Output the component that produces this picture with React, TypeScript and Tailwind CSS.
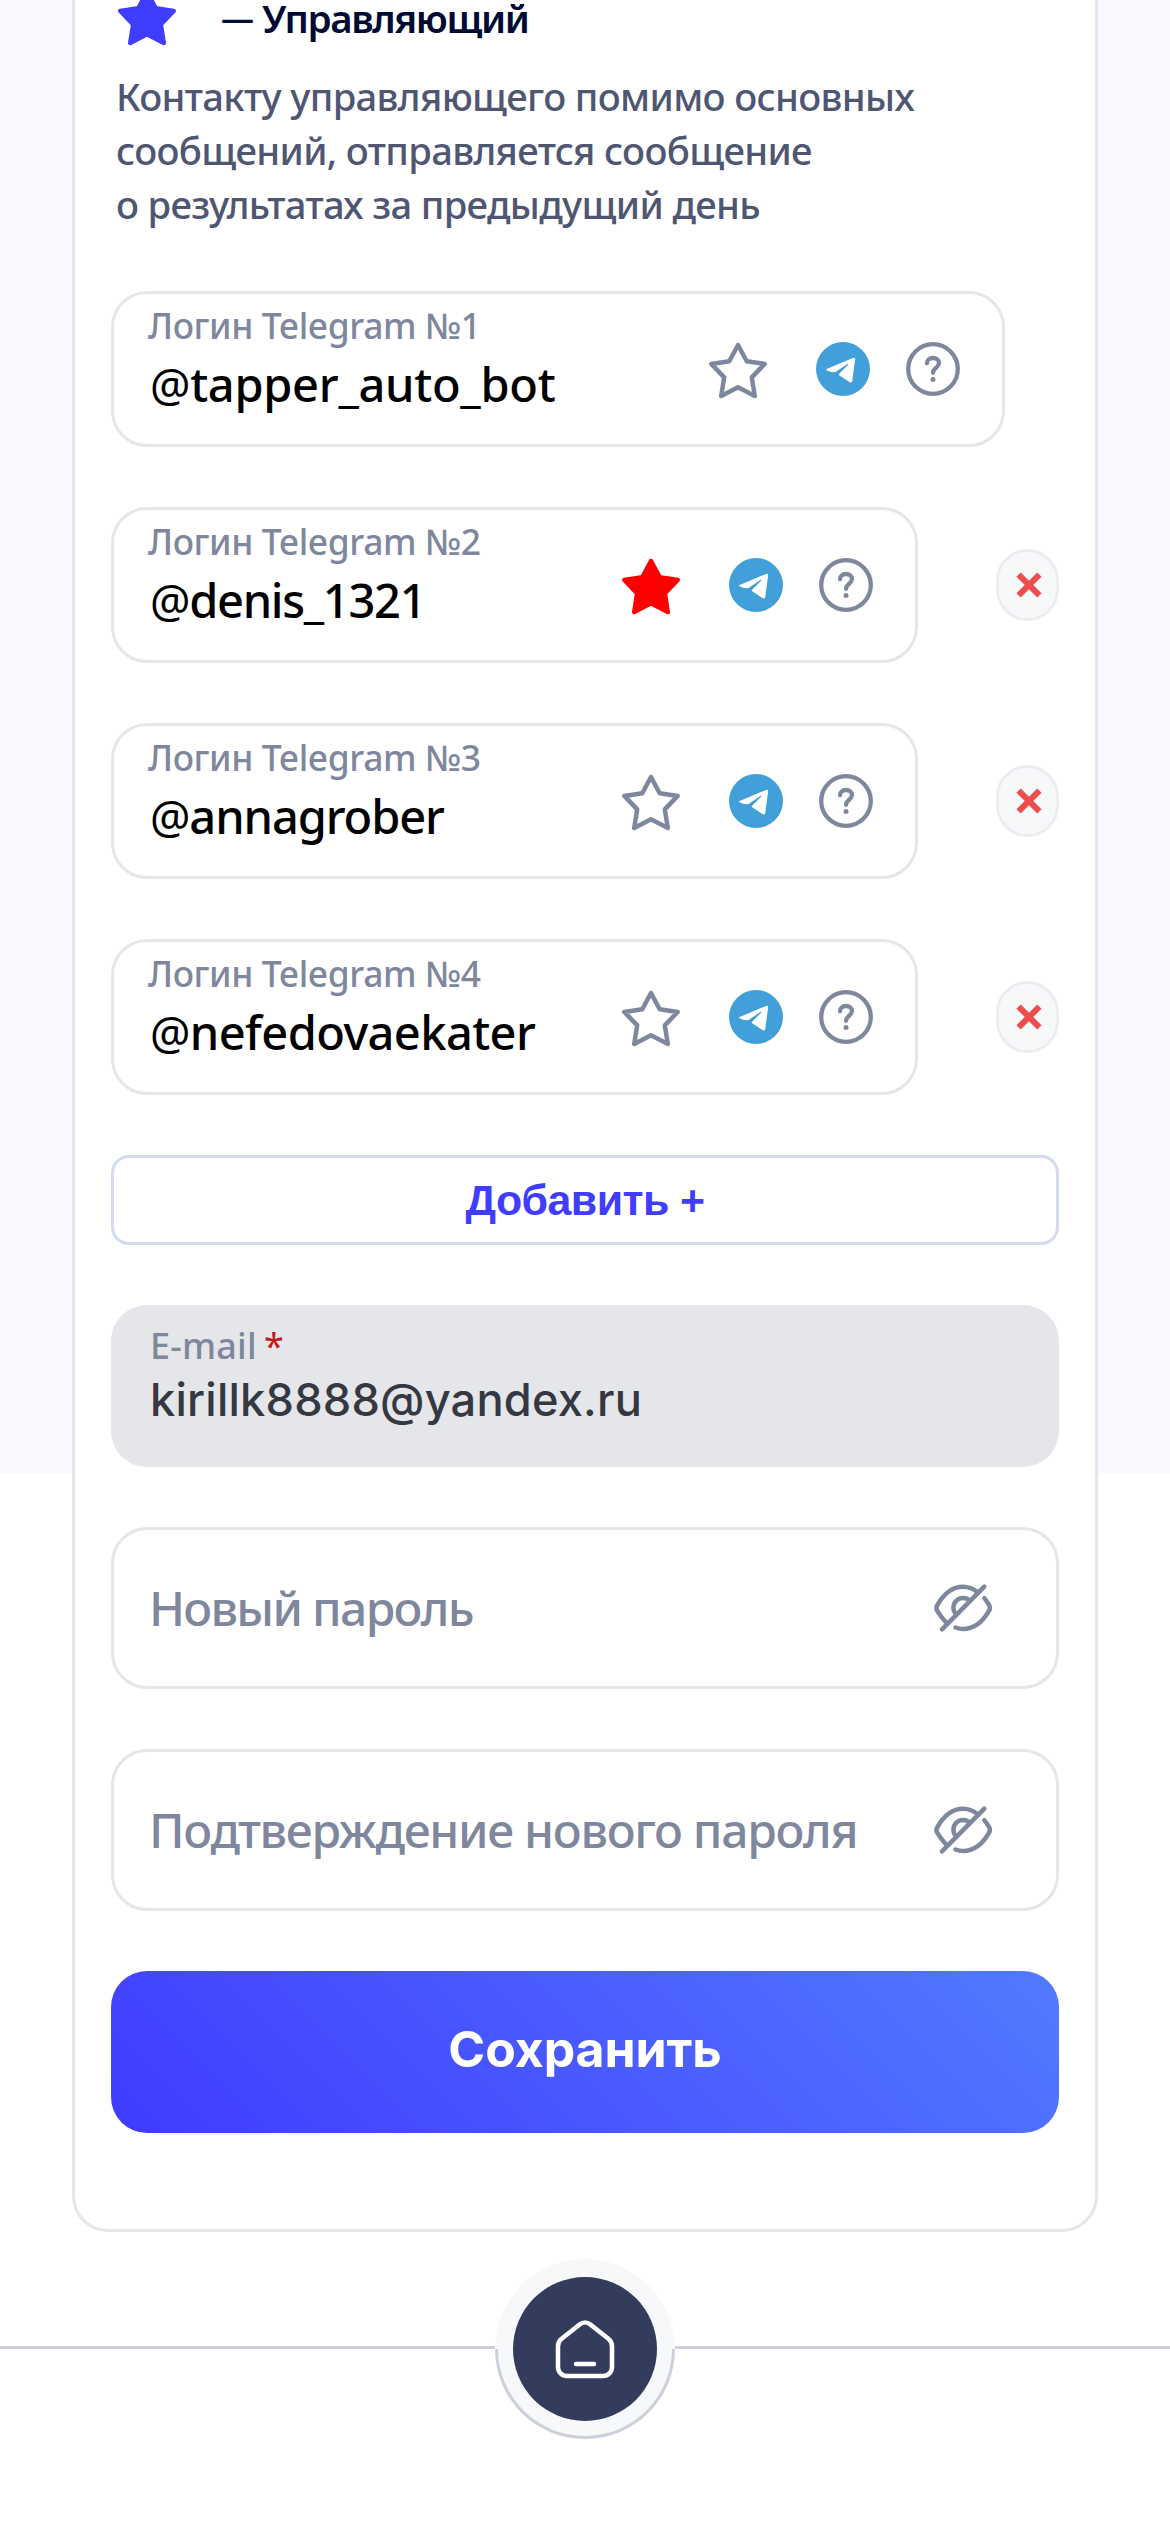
import React from "react";

const STAR =
  "M12 4L14.9 9.4L20.9 10.3L16.6 14.8L17.6 21L12 18.1L6.4 21L7.4 14.8L3.1 10.3L9.1 9.4Z";

function Star({ className, filled }: { className: string; filled?: boolean }) {
  return (
    <svg
      viewBox="0 0 24 24"
      className={`size-[72px] shrink-0 ${className}`}
      fill={filled ? "currentColor" : "none"}
      stroke="currentColor"
      strokeWidth="1.5"
      strokeLinejoin="round"
    >
      <path d={STAR} />
    </svg>
  );
}

function TelegramIcon() {
  return (
    <svg viewBox="0 0 54 54" className="size-[54px] shrink-0">
      <circle cx="27" cy="27" r="27" fill="#419fd9" />
      <path
        d="M10.6 27L37.5 15.8Q39.3 15.2 39.2 17L36.2 39.3Q35.7 41.5 33.8 40.3L23.5 33.6Q22.3 32.6 23.4 31.4L32.4 22.4Q32.3 21.2 31.3 21.9L20 29.8Q18 31.2 10.8 28.4Q9.5 27.7 10.6 27Z"
        fill="#fff"
      />
    </svg>
  );
}

function HelpIcon() {
  return (
    <svg viewBox="0 0 54 54" className="size-[54px] shrink-0 text-[#7f879d]" fill="none" stroke="currentColor" strokeWidth="4.3" strokeLinecap="round">
      <circle cx="27" cy="27" r="24.8" />
      <path d="M21 21.3v-.4a6 4.9 0 0 1 12 0c0 4.6-6 5.2-6 9.9" />
      <circle cx="27" cy="37.5" r="2.5" fill="currentColor" stroke="none" />
    </svg>
  );
}

function EyeOffIcon() {
  return (
    <svg viewBox="0 0 24 24" className="size-[72px] shrink-0 text-[#7f879d]" fill="none" stroke="currentColor" strokeWidth="1.5" strokeLinecap="round" strokeLinejoin="round">
      <path d="M6.7 17.1C5.4 15.9 4.4 14.4 3.4 12.9C3 12.2 3 11.8 3.4 11.1C5.5 7.4 8.5 4.9 12 4.9C13.9 4.9 15.6 5.6 17.1 6.9" />
      <path d="M19.1 8.7C19.7 9.4 20.2 10.2 20.7 11C21.1 11.7 21.1 12.2 20.7 12.9C18.6 16.6 15.6 19 12 19C11.1 19 10.3 18.8 9.5 18.5" />
      <path d="M14.3 9.6C13.7 9 12.9 8.7 12 8.7C10.2 8.7 8.8 10.1 8.8 11.9C8.8 12.8 9.2 13.6 9.8 14.2" />
      <path d="M5 19.1L19.1 4.9" />
    </svg>
  );
}

function HomeIcon() {
  return (
    <svg viewBox="0 0 24 24" className="size-[72px]" fill="none" stroke="#fff" strokeWidth="1.5" strokeLinecap="round" strokeLinejoin="round">
      <path d="M3 11.2C3 10.1 3.4 9.2 4.2 8.6L10.2 3.8C11.3 2.9 12.7 2.9 13.8 3.8L19.8 8.6C20.6 9.2 21 10.1 21 11.2V18C21 19.7 19.7 21 18 21H6C4.3 21 3 19.7 3 18Z" />
      <path d="M9 17H15" />
    </svg>
  );
}

const logins = [
  { n: 1, value: "tapper_auto_bot", ls: "tracking-[-0.3px]", removable: false, starred: false },
  { n: 2, value: "denis_1321", ls: "tracking-[-1.3px]", removable: true, starred: true },
  { n: 3, value: "annagrober", ls: "tracking-[-1.1px]", removable: true, starred: false },
  { n: 4, value: "nefedovaekater", ls: "tracking-[-0.6px]", removable: true, starred: false },
];

function LoginRow({ login }: { login: (typeof logins)[number] }) {
  return (
    <div className="flex items-center justify-between">
      <div
        className={`flex h-[156px] items-center justify-between rounded-[36px] border-[3px] border-[#e5e6ea] pr-[42px] pl-[34px] ${
          login.removable ? "w-[807px]" : "w-[894px]"
        }`}
      >
        <div className="flex h-full flex-col whitespace-nowrap pt-[10px]">
          <span className="text-[35.4px] leading-[42px] font-medium tracking-[-0.4px] text-[#7f879d]">
            Логин Telegram №{login.n}
          </span>
          <span className={`mt-[7px] pl-[2px] text-[47px] leading-[63px] font-medium text-black ${login.ls}`}>
            <span className="text-[45px] font-normal">@</span>
            {login.value}
          </span>
        </div>
        <div className="flex items-center">
          <Star filled={login.starred} className={login.starred ? "text-[#ff0000]" : "text-[#7f879d]"} />
          <div className="ml-[42px] flex gap-[36px]">
            <TelegramIcon />
            <HelpIcon />
          </div>
        </div>
      </div>
      {login.removable && (
        <button className="flex h-[72px] w-[63px] items-center justify-center rounded-[32px] border-[3px] border-[#ecedf1] bg-[#f7f8fa] pl-[3px]">
          <svg viewBox="0 0 26 26" className="size-[26px] shrink-0" stroke="#ee4d4c" strokeWidth="6">
            <path d="M2.6 2.6L23.4 23.4M23.4 2.6L2.6 23.4" />
          </svg>
        </button>
      )}
    </div>
  );
}

function PasswordField({ label, ls }: { label: string; ls: string }) {
  return (
    <div className="flex h-[162px] items-center justify-between rounded-[36px] border-[3px] border-[#e5e6ea] pr-[57px] pl-[35px]">
      <span className={`text-[48px] font-medium whitespace-nowrap text-[#7f879d] ${ls}`}>{label}</span>
      <EyeOffIcon />
    </div>
  );
}

export default function App() {
  return (
    <div className="h-[2532px] w-[1170px] overflow-hidden bg-[linear-gradient(#f7f9fe_1473px,#fff_1473px)] font-['Noto_Sans',sans-serif]">
      <main className="mx-[72px] flex h-[2232px] flex-col rounded-b-[36px] border-[3px] border-t-0 border-[#e5e6ea] bg-white px-[36px]">
        <div className="flex h-[36px] items-center">
          <Star filled className="-mt-[4px] text-[#413dff]" />
          <div className="ml-[38px] flex items-center font-semibold whitespace-nowrap text-[#000b33]">
            <span className="w-[41px] text-[33px] leading-[32px]">—</span>
            <span className="text-[38.5px] leading-[36px] tracking-[-1.4px]">Управляющий</span>
          </div>
        </div>
        <p className="mt-[33px] pl-[5px] text-[38.2px] leading-[54px] font-medium tracking-[-0.66px] whitespace-nowrap text-[#4f5672]">
          Контакту управляющего помимо основных
          <br />
          сообщений, отправляется сообщение
          <br />о результатах за предыдущий день
        </p>

        <div className="mt-[60px] flex flex-col gap-[60px]">
          {logins.map((l) => (
            <LoginRow key={l.n} login={l} />
          ))}

          <button className="h-[90px] rounded-[18px] border-[3px] border-[#d3daf1] text-center font-['Liberation_Sans',sans-serif] text-[42.9px] leading-[84px] font-bold tracking-[-0.56px] text-[#413dff]">
            Добавить +
          </button>

          <div className="flex h-[162px] flex-col rounded-[36px] bg-[#e5e6ea] pt-[20px] pl-[39px]">
            <span className="text-[36px] leading-[42px] font-medium tracking-[0.2px] text-[#7f879d]">
              E-mail<span className="ml-[7px] font-normal text-[#c21a1d]">*</span>
            </span>
            <span className="mt-[6px] font-['Inter',sans-serif] text-[45.2px] leading-[54px] font-[450] tracking-[0.2px] text-[#353841]">
              kirillk8888@yandex.ru
            </span>
          </div>

          <PasswordField label="Новый пароль" ls="tracking-[-1.7px]" />
          <PasswordField label="Подтверждение нового пароля" ls="tracking-[-1.3px]" />

          <button className="h-[162px] rounded-[36px] bg-[linear-gradient(45deg,#403bff,#527aff)] pb-[6px] text-center font-['Inter',sans-serif] text-[50px] font-bold tracking-[-0.1px] text-white">
            Сохранить
          </button>
        </div>
      </main>

      <nav className="mt-[27px] flex items-center">
        <div className="h-[6px] flex-1 border-t-[3px] border-[#cdcfda]" />
        <div className="relative flex size-[180px] items-center justify-center rounded-full bg-[#f7f8fa]">
          <div className="absolute inset-x-0 bottom-0 h-[90px] rounded-b-full border-[3px] border-t-0 border-[#cdcfda]" />
          <div className="relative flex size-[144px] items-center justify-center rounded-full bg-[#343c5d]">
            <HomeIcon />
          </div>
        </div>
        <div className="h-[6px] flex-1 border-t-[3px] border-[#cdcfda]" />
      </nav>
    </div>
  );
}
